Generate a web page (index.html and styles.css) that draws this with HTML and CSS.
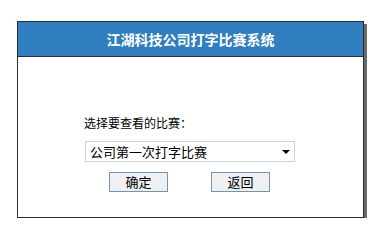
FILE: index.html
```html
<!DOCTYPE html>
<html>
	<head>
		<meta charset='utf-8'>
		<title>江湖科技公司打字比赛系统</title>
		<link rel="stylesheet" href="styles.css">
	</head>
	<body>
		<div class='panel'>
			<div class='panel-head'>江湖科技公司打字比赛系统</div>
			<div class='panel-body'>
				<div class='label'>选择要查看的比赛：</div>
				<div class='select'>
					<span>公司第一次打字比赛</span>
					<span class='arrow'></span>
				</div>
				<div class='buttons'>
					<button class='ok'>确定</button>
					<button>返回</button>
				</div>
			</div>
		</div>
	</body>
</html>
```
FILE: styles.css
```css
:root {
	--blue: rgb(47, 127, 193);
	--dark: rgb(45, 45, 45);
	--shadow: rgb(105, 105, 105);
}
html {
	background-color: #fff;
	font-family: "Noto Sans CJK SC", "Liberation Sans", sans-serif;
	color: #000;
}
body {
	margin: 0;
	padding: 21px 0 0 17px;
}
.panel {
	width: 345px;
	height: 195px;
	border: 1px solid var(--dark);
	box-shadow: 3px 3px 0 var(--shadow);
	display: flex;
	flex-direction: column;
}
.panel-head {
	height: 34px;
	background-color: var(--blue);
	border-bottom: 1px solid var(--dark);
	color: #fff;
	font-size: 14px;
	font-weight: bold;
	display: flex;
	align-items: center;
	justify-content: center;
}
.panel-body {
	padding: 59px 0 0 66px;
}
.label {
	font-size: 12px;
	line-height: 14px;
	height: 14px;
}
.select {
	width: 204px;
	height: 19px;
	margin: 11px 0 0 1px;
	border: 1px solid rgb(210, 210, 210);
	display: flex;
	align-items: center;
	justify-content: space-between;
	padding: 0 0 0 4px;
	font-size: 13px;
}
.arrow {
	width: 0;
	height: 0;
	border-left: 4px solid transparent;
	border-right: 4px solid transparent;
	border-top: 4px solid #000;
	margin-right: 4px;
}
.buttons {
	display: flex;
	gap: 43px;
	margin: 10px 0 0 25px;
}
button {
	width: 59px;
	height: 20px;
	padding: 0;
	background-color: rgb(238, 240, 242);
	border: 1px solid rgb(110, 150, 180);
	font-family: "Noto Sans CJK SC", sans-serif;
	font-size: 13px;
	line-height: 18px;
	color: #000;
}
```
